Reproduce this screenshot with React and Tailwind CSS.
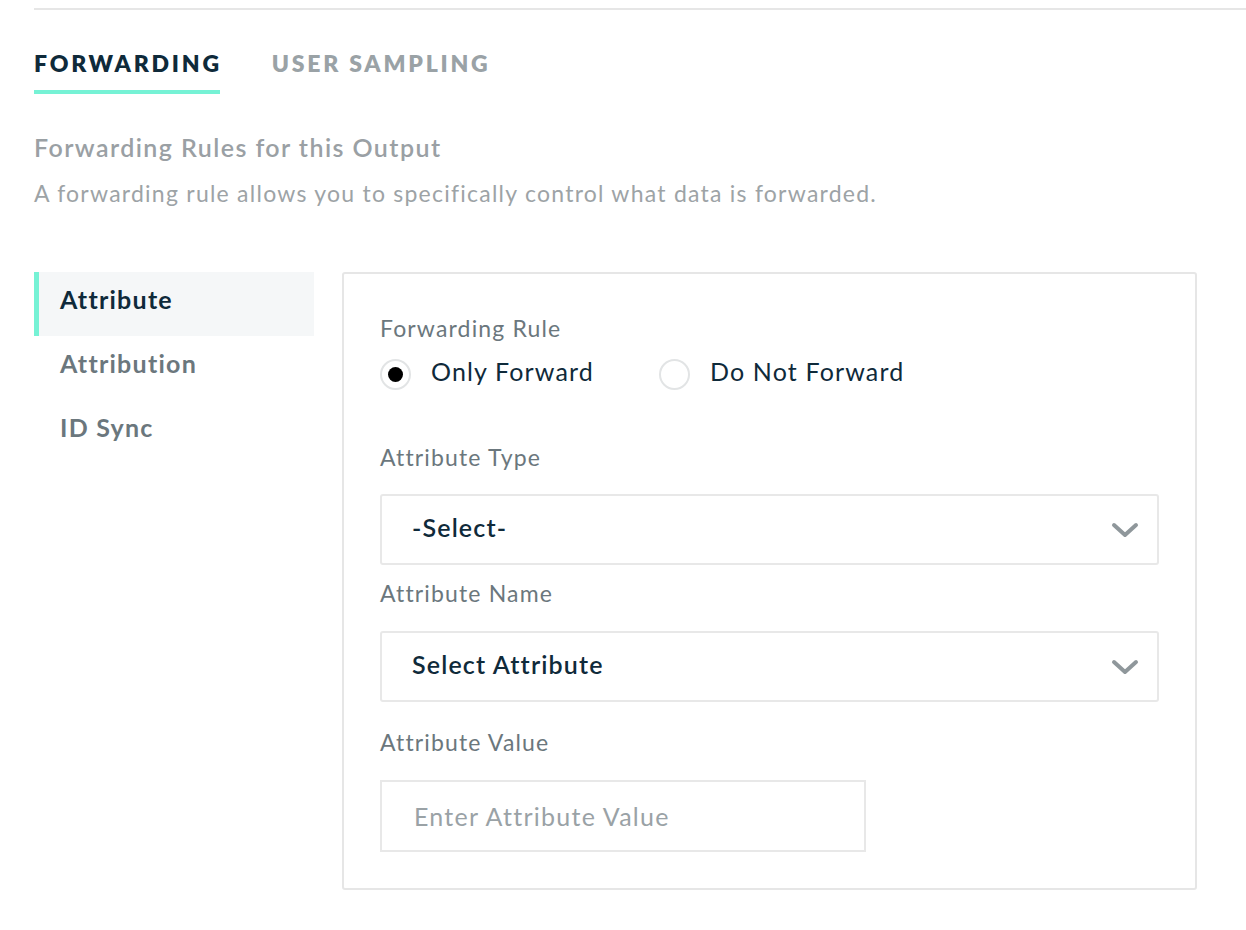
import React, { useState } from 'react';

const navItems = ['Attribute', 'Attribution', 'ID Sync'];

function Chevron() {
  return (
    <svg width="28" height="16" viewBox="0 0 28 16" fill="none">
      <path d="M3 3 L14 13 L25 3" stroke="#8f979b" strokeWidth="4" strokeLinecap="round" strokeLinejoin="round" />
    </svg>
  );
}

function Radio({ checked, label, onClick }) {
  return (
    <label onClick={onClick} className="flex items-center cursor-pointer">
      <span className="w-[31px] h-[31px] rounded-full border-2 border-[#e2e4e5] bg-white flex items-center justify-center">
        {checked && <span className="w-[15px] h-[15px] rounded-full bg-black" />}
      </span>
      <span className="ml-[20px] -mt-[8px] text-[25px] text-[#0f2a3a] leading-[30px]">{label}</span>
    </label>
  );
}

function SelectBox({ text }) {
  return (
    <div className="h-[71px] border-2 border-[#e8e8e8] rounded-[3px] flex items-center justify-between pl-[30px] pr-[18px]">
      <span className="-mt-[4px] text-[25px] font-semibold text-[#0f2a3a]">{text}</span>
      <Chevron />
    </div>
  );
}

export default function App() {
  const [tab, setTab] = useState('forwarding');
  const [active, setActive] = useState('Attribute');
  const [rule, setRule] = useState('only');

  return (
    <div className="bg-white min-h-screen w-[1246px] h-[930px] overflow-hidden pl-[34px] pt-[8px] tracking-[1.15px]" style={{ fontFamily: 'Lato, "Noto Sans", sans-serif' }}>
      <div className="h-[2px] bg-[#e6e6e6]" />

      {/* tabs */}
      <div className="flex mt-[39px] gap-[50px]">
        <button onClick={() => setTab('forwarding')} className="flex flex-col items-start cursor-pointer">
          <span className={'text-[23px] font-extrabold tracking-[0.12em] leading-[28px] ' + (tab === 'forwarding' ? 'text-[#0f2a3a]' : 'text-[#9aa2a6]')}>FORWARDING</span>
          <span className={'h-[4px] w-[186px] mt-[13px] ' + (tab === 'forwarding' ? 'bg-[#76f2d5]' : 'bg-transparent')} />
        </button>
        <button onClick={() => setTab('sampling')} className="flex flex-col items-start cursor-pointer">
          <span className={'text-[23px] font-extrabold tracking-[0.12em] leading-[28px] ' + (tab === 'sampling' ? 'text-[#0f2a3a]' : 'text-[#9aa2a6]')}>USER SAMPLING</span>
          <span className={'h-[4px] mt-[13px] ' + (tab === 'sampling' ? 'bg-[#76f2d5] w-full' : 'bg-transparent')} />
        </button>
      </div>

      <h2 className="mt-[37px] text-[25px] font-semibold tracking-[1.43px] text-[#9aa0a4] leading-[32px]">Forwarding Rules for this Output</h2>
      <p className="mt-[16px] text-[23px] tracking-[1.24px] text-[#9da3a6] leading-[28px]">A forwarding rule allows you to specifically control what data is forwarded.</p>

      <div className="flex mt-[65px]">
        {/* side nav */}
        <div className="w-[280px] flex flex-col">
          {navItems.map((item) => (
            <div
              key={item}
              onClick={() => setActive(item)}
              className={'h-[64px] flex items-center pb-[8px] text-[25px] font-bold tracking-[1.25px] cursor-pointer ' + (active === item ? 'bg-[#f5f7f8] border-l-[5px] border-[#76f2d5] pl-[21px] text-[#0f2a3a]' : 'pl-[26px] text-[#6b777d]')}
            >
              {item}
            </div>
          ))}
        </div>

        {/* panel */}
        <div className="ml-[28px] w-[855px] h-[618px] border-2 border-[#e6e6e6] rounded-[3px] pl-[36px] pr-[36px] pt-[39px]">
          <div className="text-[23px] text-[#6b777d] leading-[30px]">Forwarding Rule</div>
          <div className="flex mt-[16px] gap-[65px]">
            <Radio checked={rule === 'only'} label="Only Forward" onClick={() => setRule('only')} />
            <Radio checked={rule === 'not'} label="Do Not Forward" onClick={() => setRule('not')} />
          </div>

          <div className="mt-[52px] text-[23px] text-[#6b777d] leading-[30px]">Attribute Type</div>
          <div className="mt-[22px]">
            <SelectBox text="-Select-" />
          </div>

          <div className="mt-[13px] text-[23px] text-[#6b777d] leading-[30px]">Attribute Name</div>
          <div className="mt-[23px]">
            <SelectBox text="Select Attribute" />
          </div>

          <div className="mt-[25px] text-[23px] text-[#6b777d] leading-[30px]">Attribute Value</div>
          <input
            placeholder="Enter Attribute Value"
            className="mt-[23px] w-[486px] h-[72px] border-2 border-[#e8e8e8] px-[32px] text-[25px] tracking-[1.25px] text-[#0f2a3a] placeholder:text-[#9aa2a6] outline-none"
          />
        </div>
      </div>
    </div>
  );
}
